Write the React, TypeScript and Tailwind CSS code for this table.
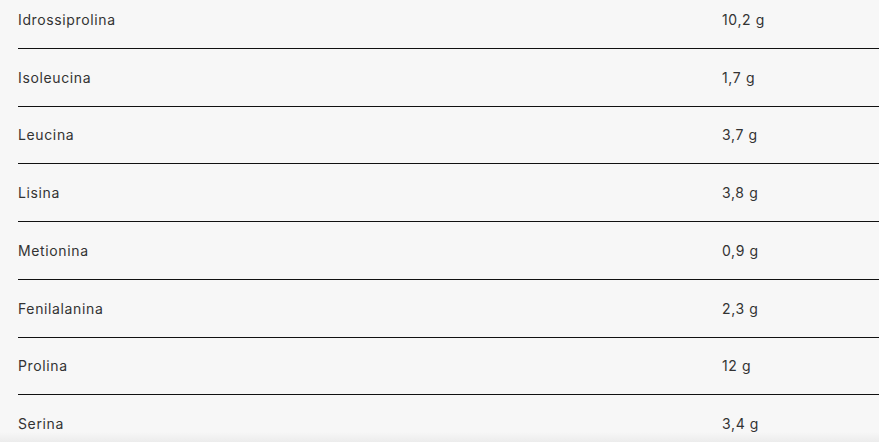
const rows: [string, string][] = [
  ["Idrossiprolina", "10,2 g"],
  ["Isoleucina", "1,7 g"],
  ["Leucina", "3,7 g"],
  ["Lisina", "3,8 g"],
  ["Metionina", "0,9 g"],
  ["Fenilalanina", "2,3 g"],
  ["Prolina", "12 g"],
  ["Serina", "3,4 g"],
];

export default function App() {
  return (
    <div className="relative h-[442px] w-[879px] overflow-hidden bg-[#f7f7f7] text-[#333333]" style={{ fontFamily: "Inter, 'Open Sans', sans-serif" }}>
      <div className="-mt-[9px] pl-[18px]">
        {rows.map(([k, v]) => (
          <div key={k} className="grid h-[57.75px] grid-cols-[704px_1fr] items-center border-b border-[#111111] text-[14px] tracking-[0.045em]">
            <span>{k}</span>
            <span>{v}</span>
          </div>
        ))}
      </div>
      <div className="pointer-events-none absolute bottom-0 left-0 h-[10px] w-full bg-gradient-to-b from-transparent to-[#ececec]" />
    </div>
  );
}
